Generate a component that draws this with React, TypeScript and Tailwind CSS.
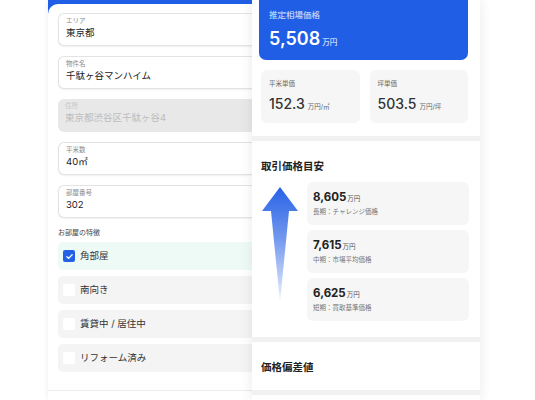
import { FunctionComponent } from "react";

const jp = "font-['Inter','Noto_Sans_CJK_JP',sans-serif]";

type FieldType = { label: string; value: string; disabled?: boolean };

const Field: FunctionComponent<FieldType> = ({ label, value, disabled = false }) => {
  return (
    <div
      className={`h-[33px] shrink-0 rounded-l-[6px] flex flex-col pt-[3px] pl-[7px] ${
        disabled
          ? "bg-[#e8e8e8] text-[#bdbdbd]"
          : "bg-white border border-r-0 border-solid border-[#e3e3e3] shadow-[0_1px_2px_rgba(0,0,0,0.06)]"
      }`}
    >
      <div className={`text-[6.5px] leading-[9px] ${disabled ? "text-[#c6c6c6]" : "text-[#8a8a8a]"}`}>
        {label}
      </div>
      <div className={`mt-[1px] text-[9.5px] leading-[12px] ${disabled ? "" : "text-[#222]"}`}>
        {value}
      </div>
    </div>
  );
};

type OptionType = { label: string; checked?: boolean };

const Option: FunctionComponent<OptionType> = ({ label, checked = false }) => {
  return (
    <div
      className={`h-[28px] shrink-0 rounded-l-[5px] flex flex-row items-center pl-[5px] gap-[5px] ${
        checked ? "bg-[#eefaf6]" : "bg-[#f4f4f4]"
      }`}
    >
      {checked ? (
        <div className="w-[12px] h-[12px] rounded-[2px] bg-[#2461e6] flex items-center justify-center">
          <svg width="9" height="9" viewBox="0 0 24 24" fill="none" stroke="white" strokeWidth="3.5" strokeLinecap="round" strokeLinejoin="round">
            <path d="M5 12.5l4.5 4.5L19 7.5" />
          </svg>
        </div>
      ) : (
        <div className="w-[12px] h-[12px] rounded-[2px] bg-white" />
      )}
      <div className="text-[9.5px] leading-[12px] text-[#333]">{label}</div>
    </div>
  );
};

type PriceType = { value: string; note: string };

const PriceCard: FunctionComponent<PriceType> = ({ value, note }) => {
  return (
    <div className="h-[43px] rounded-[6px] bg-[#f6f6f6] flex flex-col justify-center pl-[6px] gap-[3px]">
      <div className="flex flex-row items-baseline">
        <span className="text-[11.5px] leading-[13px] font-bold text-[#222]">{value}</span>
        <span className="text-[6.5px] text-[#555] ml-[1px]">万円</span>
      </div>
      <div className="text-[6.5px] leading-[8px] text-[#777]">{note}</div>
    </div>
  );
};

const App: FunctionComponent = () => {
  return (
    <div className={`w-[535px] h-[400px] overflow-hidden bg-white flex flex-row ${jp}`}>
      {/* form panel */}
      <div className="ml-[48px] w-[215px] shrink-0 bg-[#215ee6] flex flex-col shadow-[0_0_6px_rgba(0,0,0,0.08)]">
        <div className="mt-[4px] flex-1 bg-white rounded-tl-[10px] flex flex-col pl-[10px] pt-[9px]">
          <div className="flex flex-col gap-[10px]">
            <Field label="エリア" value="東京都" />
            <Field label="物件名" value="千駄ヶ谷マンハイム" />
            <Field label="住所" value="東京都渋谷区千駄ヶ谷4" disabled />
            <Field label="平米数" value="40㎡" />
            <Field label="部屋番号" value="302" />
          </div>
          <div className="mt-[10px] text-[7px] leading-[9px] text-[#444]">お部屋の特徴</div>
          <div className="mt-[5px] flex flex-col gap-[6px]">
            <Option label="角部屋" checked />
            <Option label="南向き" />
            <Option label="賃貸中 / 居住中" />
            <Option label="リフォーム済み" />
          </div>
          <div className="mt-[18px] -ml-[10px] border-t border-solid border-[#ececec]" />
        </div>
      </div>

      {/* result panel */}
      <div className="-ml-[11px] w-[228px] shrink-0 relative z-10 bg-[#f1f1f1] flex flex-col gap-[5px] shadow-[0_0_12px_rgba(0,0,0,0.09)]">
        <div className="bg-white pl-[7px] pr-[12px] pb-[13px] flex flex-col">
          <div className="h-[60px] rounded-b-[7px] bg-[#215ee6] flex flex-col pl-[10px] pt-[10px] text-white">
            <div className="text-[8.5px] leading-[10px] text-white/85">推定相場価格</div>
            <div className="mt-[8px] flex flex-row items-baseline">
              <span className="text-[18px] leading-[22px] font-semibold">5,508</span>
              <span className="ml-[2px] text-[7.5px]">万円</span>
            </div>
          </div>
          <div className="mt-[10px] ml-[2px] grid grid-cols-2 gap-[10px]">
            <div className="h-[53px] rounded-[6px] bg-[#f6f6f6] flex flex-col pl-[8px] pt-[10px]">
              <div className="text-[6.5px] leading-[9px] text-[#666]">平米単価</div>
              <div className="mt-[7px] flex flex-row items-baseline">
                <span className="text-[14px] leading-[16px] font-medium text-[#333]">152.3</span>
                <span className="ml-[3px] text-[6.5px] text-[#666]">万円/㎡</span>
              </div>
            </div>
            <div className="h-[53px] rounded-[6px] bg-[#f6f6f6] flex flex-col pl-[8px] pt-[10px]">
              <div className="text-[6.5px] leading-[9px] text-[#666]">坪単価</div>
              <div className="mt-[7px] flex flex-row items-baseline">
                <span className="text-[14px] leading-[16px] font-medium text-[#333]">503.5</span>
                <span className="ml-[3px] text-[6.5px] text-[#666]">万円/坪</span>
              </div>
            </div>
          </div>
        </div>

        <div className="bg-white pl-[9px] pr-[11px] pt-[20px] pb-[16px] flex flex-col">
          <div className="text-[10.5px] leading-[12px] font-bold text-[#222]">取引価格目安</div>
          <div className="mt-[9px] flex flex-row">
            <div className="w-[46px] shrink-0 pt-[5px]">
              <svg width="38" height="116" viewBox="0 0 38 116">
                <defs>
                  <linearGradient id="arrowFade" x1="0" y1="0" x2="0" y2="1">
                    <stop offset="0" stopColor="#2862e6" />
                    <stop offset="0.45" stopColor="#7398ee" />
                    <stop offset="1" stopColor="#edf2fd" />
                  </linearGradient>
                </defs>
                <path d="M19 0 L37 24 L28 24 L19 115 L10 24 L1 24 Z" fill="url(#arrowFade)" />
              </svg>
            </div>
            <div className="flex-1 flex flex-col gap-[5px]">
              <PriceCard value="8,605" note="長期：チャレンジ価格" />
              <PriceCard value="7,615" note="中期：市場平均価格" />
              <PriceCard value="6,625" note="短期：買取基準価格" />
            </div>
          </div>
        </div>

        <div className="bg-white pl-[9px] pt-[20px] h-[48px] shrink-0">
          <div className="text-[10.5px] leading-[12px] font-bold text-[#222]">価格偏差値</div>
        </div>

        <div className="bg-white flex-1" />
      </div>
    </div>
  );
};

export default App;
